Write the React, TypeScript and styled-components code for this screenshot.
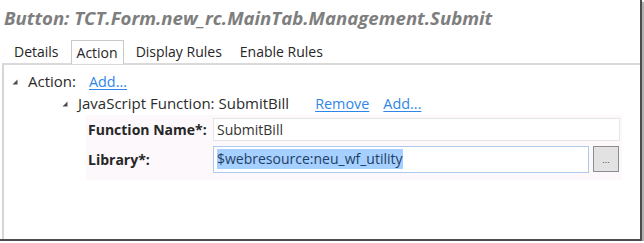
import React from "react";
import styled, { createGlobalStyle } from "styled-components";

const Global = createGlobalStyle`
  html, body {
    margin: 0;
    padding: 0;
    background: #fff;
  }
  body {
    font-family: "Open Sans", "Liberation Sans", sans-serif;
    color: #2b2b2b;
  }
`;

const Expander = () => (
  <Arrow width="6" height="6" viewBox="0 0 6 6">
    <polygon points="5.5,0.5 5.5,5.5 0.5,5.5" fill="#4a4a4a" />
  </Arrow>
);

const App = () => {
  return (
    <>
      <Global />
      <Frame>
        <Title>Button: TCT.Form.new_rc.MainTab.Management.Submit</Title>
        <Tabs>
          <Tab>Details</Tab>
          <Tab active>Action</Tab>
          <Tab>Display Rules</Tab>
          <Tab>Enable Rules</Tab>
        </Tabs>
        <Panel>
          <TreeRow indent={8}>
            <Expander />
            <NodeText>Action:</NodeText>
            <Links gap={13}>
              <Link>Add...</Link>
            </Links>
          </TreeRow>
          <TreeRow indent={58}>
            <Expander />
            <NodeText>JavaScript Function: SubmitBill</NodeText>
            <Links gap={26}>
              <Link>Remove</Link>
              <Link>Add...</Link>
            </Links>
          </TreeRow>
          <Form>
            <Label>Function Name*:</Label>
            <Field>
              <TextBox>SubmitBill</TextBox>
            </Field>
            <Label>Library*:</Label>
            <Field>
              <TextBox focused>
                <Selected>$webresource:neu_wf_utility</Selected>
              </TextBox>
              <Browse>...</Browse>
            </Field>
          </Form>
        </Panel>
      </Frame>
    </>
  );
};

const Frame = styled.div`
  display: flex;
  flex-direction: column;
  width: 640px;
  height: 239px;
  border-right: 2px solid #4c4c4c;
  border-bottom: 2px solid #4c4c4c;
  box-shadow: 2px 2px 1px rgba(0, 0, 0, 0.3);
  box-sizing: content-box;
  background: #fff;
`;

const Title = styled.h1`
  margin: 0;
  padding: 6px 0 0 4px;
  height: 33px;
  box-sizing: border-box;
  font-family: "Open Sans", "Liberation Sans", sans-serif;
  font-size: 18.6px;
  font-weight: 700;
  font-style: italic;
  color: #7e7e7e;
  white-space: nowrap;
  line-height: 24px;
`;

const Tabs = styled.div`
  display: flex;
  gap: 6px;
  padding-left: 8px;
  height: 24px;
  margin-top: 6px;
`;

const Tab = styled.div<{ active?: boolean }>`
  padding: 0 5px;
  font-size: 14px;
  line-height: 24px;
  color: #262626;
  box-sizing: border-box;
  border: 1px solid ${(p) => (p.active ? "#c9c9c9" : "transparent")};
  border-bottom: none;
  background: #fff;
  position: relative;
  top: ${(p) => (p.active ? "1px" : "0")};
  z-index: 1;
`;

const Panel = styled.div`
  flex: 1;
  margin-left: 2px;
  border-top: 2px solid #dadada;
  border-left: 2px solid #d6d6d6;
  padding-top: 5px;
`;

const TreeRow = styled.div<{ indent: number }>`
  display: flex;
  align-items: center;
  height: 22px;
  padding-left: ${(p) => p.indent}px;
`;

const Arrow = styled.svg`
  flex: none;
  margin-right: 10px;
  margin-top: 2px;
`;

const NodeText = styled.span`
  font-size: 15px;
  color: #2b2b2b;
  white-space: nowrap;
`;

const Links = styled.span<{ gap: number }>`
  display: flex;
  gap: 14px;
  margin-left: ${(p) => p.gap}px;
`;

const Link = styled.a`
  font-size: 14.4px;
  color: #2f86e8;
  text-decoration: underline;
  text-underline-offset: 2px;
  cursor: pointer;
`;

const Form = styled.div`
  display: grid;
  grid-template-columns: 127px 407px;
  grid-template-rows: 27px 32px;
  align-items: center;
  width: 536px;
  margin: 1px 0 0 82px;
  padding: 1px 0 5px;
  background: #fcf8fc;
`;

const Label = styled.div`
  padding-left: 2px;
  font-size: 14px;
  font-weight: 700;
  color: #262626;
  white-space: nowrap;
`;

const Field = styled.div`
  display: flex;
  align-items: center;
  gap: 4px;
`;

const TextBox = styled.div<{ focused?: boolean }>`
  flex: 1;
  display: flex;
  align-items: center;
  height: ${(p) => (p.focused ? "27px" : "23px")};
  box-sizing: border-box;
  padding-left: 3px;
  border: 1px solid ${(p) => (p.focused ? "#aecbee" : "#e6e6e6")};
  background: #fff;
  font-size: 14px;
  color: #333;
`;

const Selected = styled.span`
  background: #a6d0ff;
  color: #1f3f66;
  line-height: 20px;
`;

const Browse = styled.button`
  width: 26px;
  height: 26px;
  padding: 0 0 6px;
  margin-right: 1px;
  border: 1px solid #8d8d8d;
  background: #e2e2e2;
  font-family: "Liberation Sans", sans-serif;
  font-size: 9px;
  color: #444;
  display: flex;
  align-items: flex-end;
  justify-content: center;
`;

export default App;
